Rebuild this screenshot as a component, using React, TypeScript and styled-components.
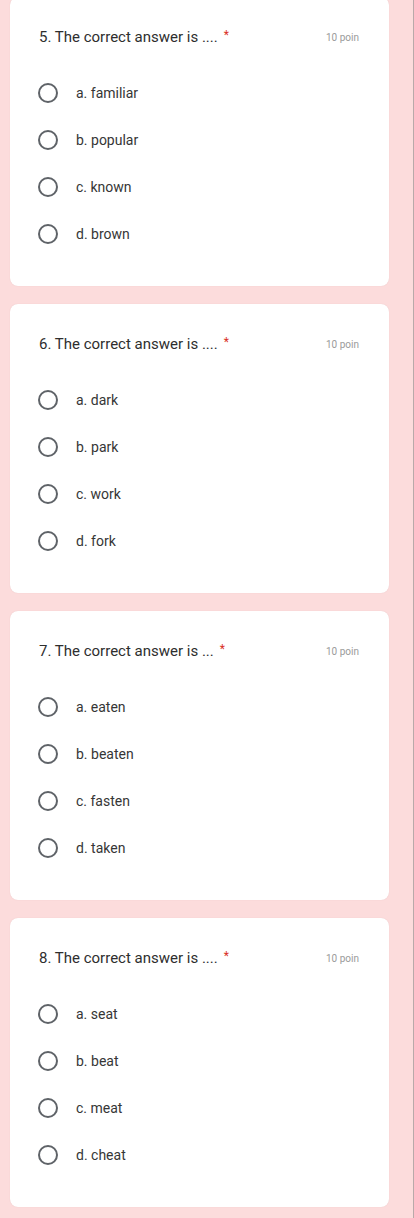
import React from "react";
import styled, { createGlobalStyle } from "styled-components";

const Global = createGlobalStyle`
  html, body { margin: 0; padding: 0; }
  body {
    background: #fcdcdc;
    font-family: Roboto, "Noto Sans", Arial, sans-serif;
    overflow: hidden;
  }
`;

const Page = styled.div`
  display: flex;
  flex-direction: column;
  gap: 18px;
  padding: 0 24px 0 10px;
  margin-top: -3px;
  min-height: 1221px;
  box-sizing: border-box;
  border-right: 1px solid #b9a9a9;
`;

const Card = styled.section`
  background: #ffffff;
  border-radius: 8px;
  height: 289px;
  box-sizing: border-box;
  padding: 30px 0 0 29px;
  display: flex;
  flex-direction: column;
  box-shadow: 0 0 1px rgba(200, 150, 150, 0.4);
`;

const TitleRow = styled.div`
  display: flex;
  align-items: center;
  justify-content: space-between;
  height: 20px;
  margin-bottom: 22px;
`;

const Title = styled.div`
  font-size: 15px;
  color: #2e2e2e;
`;

const Star = styled.span`
  color: #d93025;
  margin-left: 6px;
  font-size: 12px;
  vertical-align: 3px;
`;

const Points = styled.div`
  font-size: 10px;
  color: #9a9a9a;
  width: 63px;
  overflow: hidden;
  white-space: nowrap;
`;

const Options = styled.div`
  display: flex;
  flex-direction: column;
`;

const Option = styled.label`
  display: flex;
  align-items: center;
  height: 47px;
`;

const Radio = styled.span`
  width: 20px;
  height: 20px;
  box-sizing: border-box;
  border: 2px solid #5f6368;
  border-radius: 50%;
  margin-left: -1px;
  margin-right: 18px;
  flex: none;
`;

const OptionText = styled.span`
  font-size: 14px;
  color: #363636;
`;

const questions = [
  { n: 5, dots: "....", opts: ["a. familiar", "b. popular", "c. known", "d. brown"] },
  { n: 6, dots: "....", opts: ["a. dark", "b. park", "c. work", "d. fork"] },
  { n: 7, dots: "...", opts: ["a. eaten", "b. beaten", "c. fasten", "d. taken"] },
  { n: 8, dots: "....", opts: ["a. seat", "b. beat", "c. meat", "d. cheat"] },
];

export default function App() {
  return (
    <>
      <Global />
      <Page>
        {questions.map((q) => (
          <Card key={q.n}>
            <TitleRow>
              <Title>
                {q.n}. The correct answer is {q.dots}
                <Star>*</Star>
              </Title>
              <Points>10 poin</Points>
            </TitleRow>
            <Options>
              {q.opts.map((o) => (
                <Option key={o}>
                  <Radio />
                  <OptionText>{o}</OptionText>
                </Option>
              ))}
            </Options>
          </Card>
        ))}
      </Page>
    </>
  );
}
